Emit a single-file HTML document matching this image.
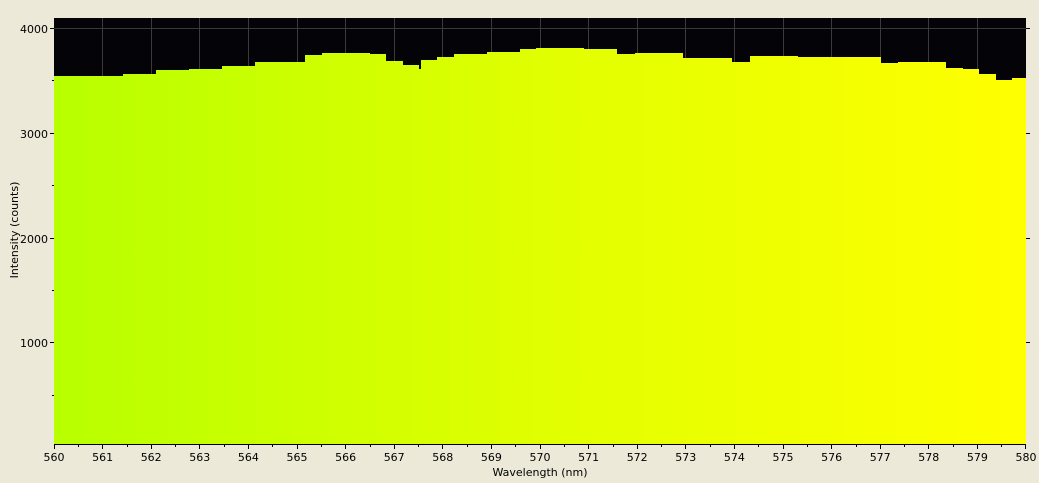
<!DOCTYPE html>
<html><head><meta charset="utf-8"><style>
html,body{margin:0;padding:0;background:#ece9d8;}
svg{display:block;font-family:"DejaVu Sans","Liberation Sans",sans-serif;font-size:11px;}
</style></head><body>
<svg width="1039" height="483" viewBox="0 0 1039 483">
<defs>
<linearGradient id="g" x1="54" x2="1026" y1="0" y2="0" gradientUnits="userSpaceOnUse">
<stop offset="0" stop-color="#b8ff00"/>
<stop offset="0.5" stop-color="#e0ff00"/>
<stop offset="1" stop-color="#ffff00"/>
</linearGradient>
</defs>
<rect x="0" y="0" width="1039" height="483" fill="#ece9d8"/>
<rect x="54" y="18" width="972" height="426" fill="#040307"/>
<g stroke="#3a3a3a" stroke-width="1">
<line x1="54" y1="28.5" x2="1026" y2="28.5"/>
<line x1="102.5" y1="18" x2="102.5" y2="444"/><line x1="151.5" y1="18" x2="151.5" y2="444"/>
<line x1="199.5" y1="18" x2="199.5" y2="444"/><line x1="248.5" y1="18" x2="248.5" y2="444"/>
<line x1="297.5" y1="18" x2="297.5" y2="444"/><line x1="345.5" y1="18" x2="345.5" y2="444"/>
<line x1="394.5" y1="18" x2="394.5" y2="444"/><line x1="442.5" y1="18" x2="442.5" y2="444"/>
<line x1="491.5" y1="18" x2="491.5" y2="444"/><line x1="540.5" y1="18" x2="540.5" y2="444"/>
<line x1="588.5" y1="18" x2="588.5" y2="444"/><line x1="637.5" y1="18" x2="637.5" y2="444"/>
<line x1="685.5" y1="18" x2="685.5" y2="444"/><line x1="734.5" y1="18" x2="734.5" y2="444"/>
<line x1="783.5" y1="18" x2="783.5" y2="444"/><line x1="831.5" y1="18" x2="831.5" y2="444"/>
<line x1="880.5" y1="18" x2="880.5" y2="444"/><line x1="928.5" y1="18" x2="928.5" y2="444"/>
<line x1="977.5" y1="18" x2="977.5" y2="444"/>
</g>
<path fill="url(#g)" d="M54 444 V76 H123 V74 H156 V70 H189 V69 H222 V66 H255 V62 H305 V55 H322 V53 H370 V54 H386 V61 H403 V65 H419 V69 H421 V60 H437 V57 H454 V54 H487 V52 H520 V49 H536 V48 H584 V49 H617 V54 H635 V53 H683 V58 H732 V62 H750 V56 H798 V57 H881 V63 H898 V62 H946 V68 H963 V69 H979 V74 H996 V80 H1012 V78 H1026 V444 Z"/>
<g stroke="#000" stroke-width="1">
<line x1="54" y1="444.5" x2="1026" y2="444.5"/>
<line x1="50" y1="28.5" x2="54" y2="28.5"/><line x1="52" y1="80.5" x2="54" y2="80.5"/>
<line x1="50" y1="133.5" x2="54" y2="133.5"/><line x1="52" y1="185.5" x2="54" y2="185.5"/>
<line x1="50" y1="238.5" x2="54" y2="238.5"/><line x1="52" y1="290.5" x2="54" y2="290.5"/>
<line x1="50" y1="342.5" x2="54" y2="342.5"/><line x1="52" y1="395.5" x2="54" y2="395.5"/>
<line x1="1026" y1="28.5" x2="1030" y2="28.5"/><line x1="1026" y1="133.5" x2="1030" y2="133.5"/>
<line x1="1026" y1="238.5" x2="1030" y2="238.5"/><line x1="1026" y1="342.5" x2="1030" y2="342.5"/>
</g>
<path stroke="#000" stroke-width="1" fill="none" d="
M54.5 444V449 M78.5 444V447 M102.5 444V449 M127.5 444V447 M151.5 444V449 M175.5 444V447 M199.5 444V449 M224.5 444V447
M248.5 444V449 M272.5 444V447 M297.5 444V449 M321.5 444V447 M345.5 444V449 M370.5 444V447 M394.5 444V449 M418.5 444V447
M442.5 444V449 M467.5 444V447 M491.5 444V449 M515.5 444V447 M540.5 444V449 M564.5 444V447 M588.5 444V449 M613.5 444V447
M637.5 444V449 M661.5 444V447 M685.5 444V449 M710.5 444V447 M734.5 444V449 M758.5 444V447 M783.5 444V449 M807.5 444V447
M831.5 444V449 M856.5 444V447 M880.5 444V449 M904.5 444V447 M928.5 444V449 M953.5 444V447 M977.5 444V449 M1001.5 444V447 M1025.5 444V449"/>
<g fill="#000" text-anchor="end">
<text x="48" y="33">4000</text><text x="48" y="138">3000</text>
<text x="48" y="243">2000</text><text x="48" y="347">1000</text>
</g>
<g fill="#000" text-anchor="middle">
<text x="54" y="461">560</text><text x="102.6" y="461">561</text><text x="151.2" y="461">562</text>
<text x="199.8" y="461">563</text><text x="248.4" y="461">564</text><text x="297" y="461">565</text>
<text x="345.6" y="461">566</text><text x="394.2" y="461">567</text><text x="442.8" y="461">568</text>
<text x="491.4" y="461">569</text><text x="540" y="461">570</text><text x="588.6" y="461">571</text>
<text x="637.2" y="461">572</text><text x="685.8" y="461">573</text><text x="734.4" y="461">574</text>
<text x="783" y="461">575</text><text x="831.6" y="461">576</text><text x="880.2" y="461">577</text>
<text x="928.8" y="461">578</text><text x="977.4" y="461">579</text><text x="1026" y="461">580</text>
</g>
<text x="540" y="476" text-anchor="middle" fill="#000">Wavelength (nm)</text>
<text transform="translate(18,230) rotate(-90)" text-anchor="middle" fill="#000">Intensity (counts)</text>
</svg>
</body></html>
